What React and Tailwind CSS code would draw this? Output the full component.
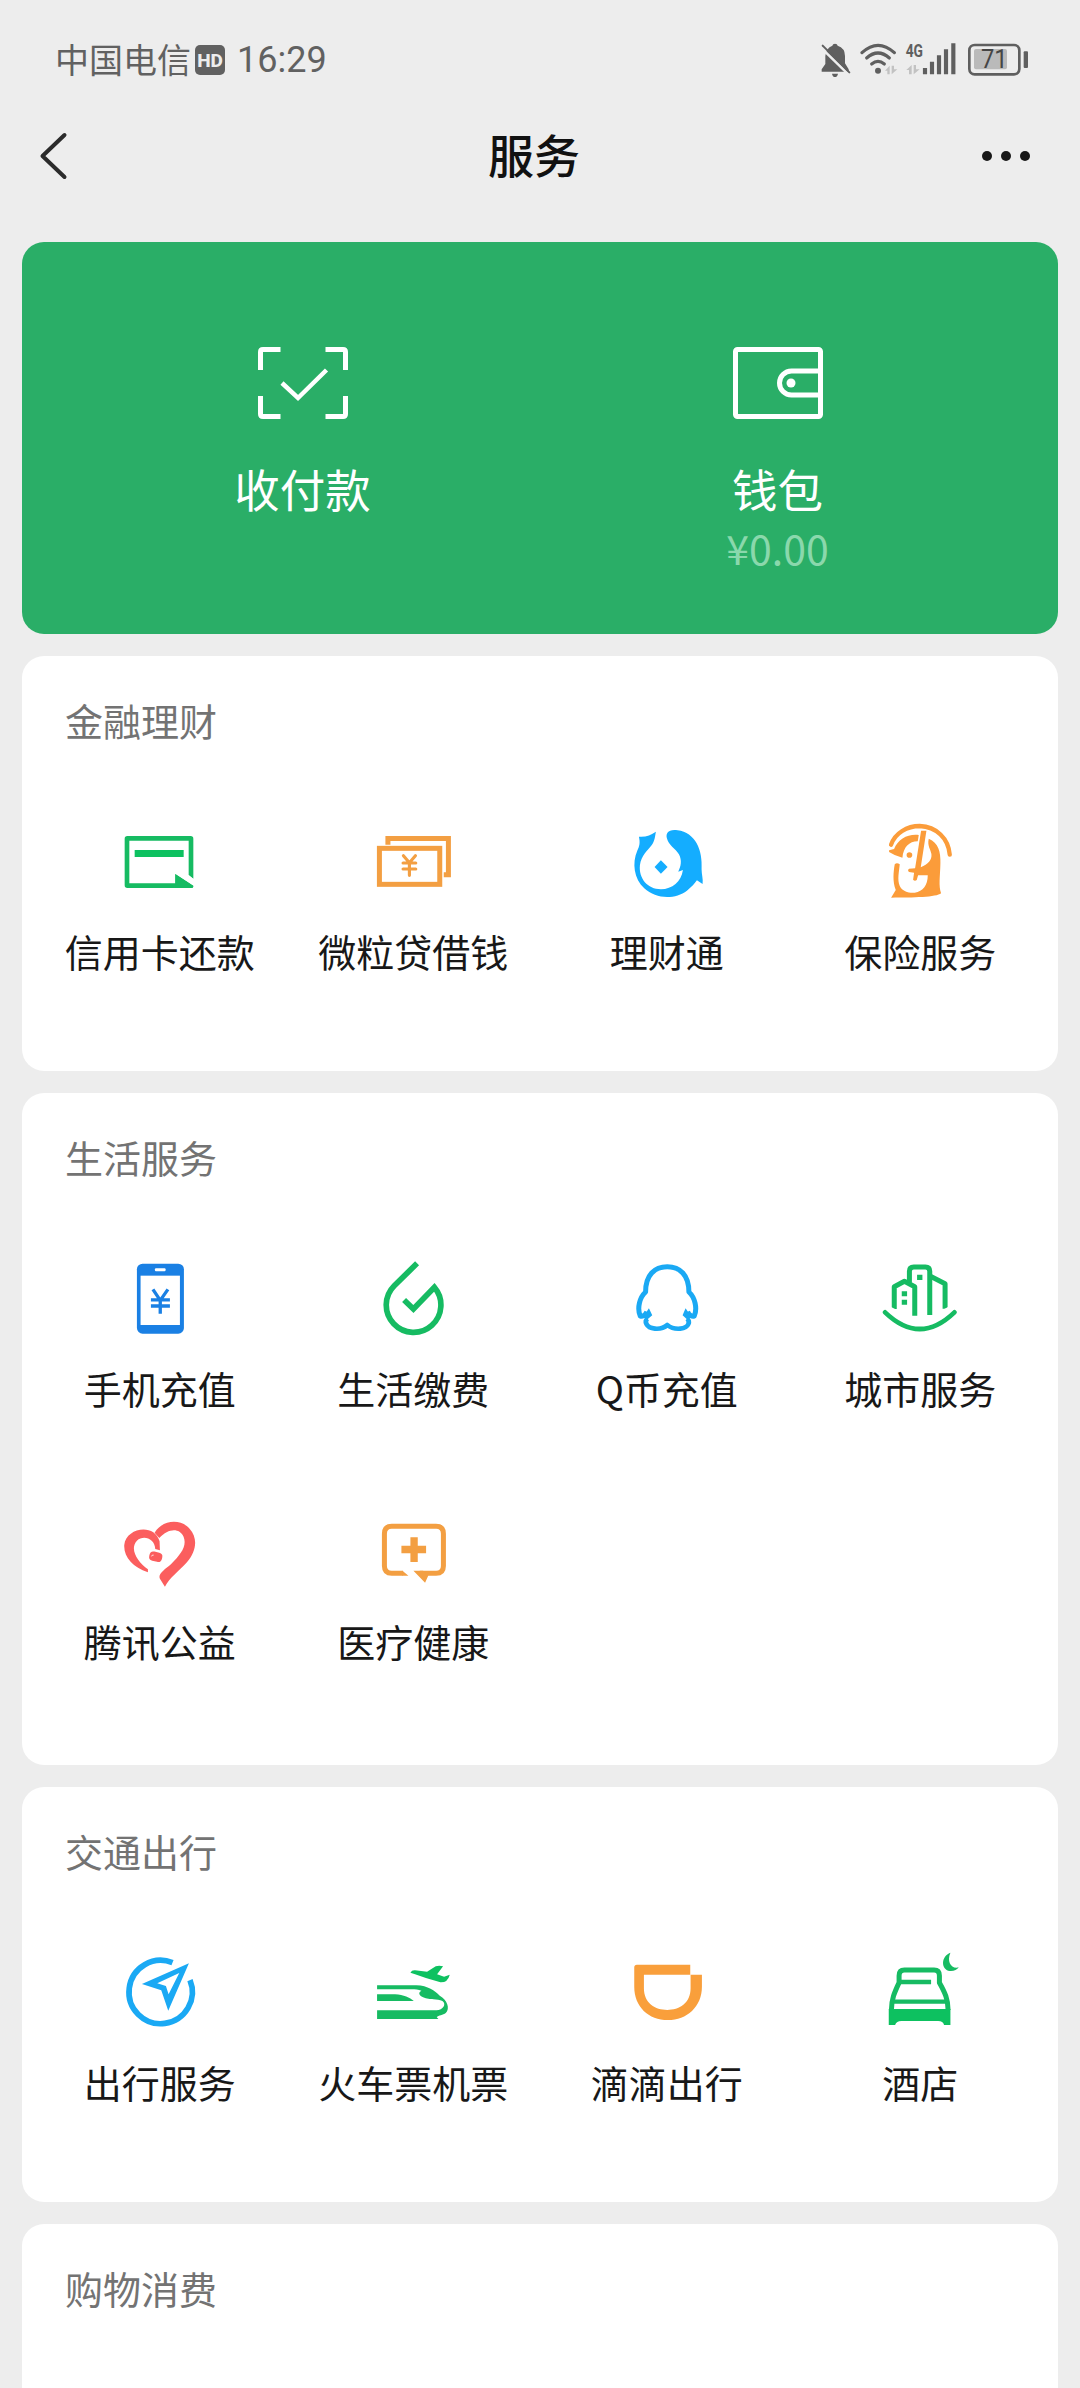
import React from "react";

const GREEN = "#16bb62";
const ORANGE = "#f39f42";
const BLUE = "#1aa9f4";

function Glyph({ box, children }) {
  return (
    <svg className="size-[84px]" viewBox={box} fill="none">
      {children}
    </svg>
  );
}

const CreditCard = () => (
  <Glyph box="233 60 252 252">
    <path d="M445 225 V122 H267 V250 H405 V222 L458 256 Q460 264 452 264 H261 Q253 264 253 256 V116 Q253 108 261 108 H451 Q459 108 459 116 V236Z" fill={GREEN} />
    <path d="M445 226 L459 237 V258 L405 222Z" fill="#fff" />
    <path d="M405 222 L459 257 Q460 264 452 264 H405Z" fill={GREEN} />
    <rect x="283" y="150" width="147" height="21" fill="#0dc160" />
  </Glyph>
);

const Loan = () => (
  <Glyph box="993.75 60 252 252">
    <rect x="1019" y="145" width="181" height="108" stroke={ORANGE} strokeWidth="15" />
    <path d="M1044.500 134 V115.500 H1226 V224 H1212" stroke={ORANGE} strokeWidth="15" />
    <g stroke={ORANGE} strokeWidth="9.500" strokeLinecap="round">
      <path d="M1091 167 L1109 188 L1127 167 M1109 188 V226 M1090 189 H1128 M1090 207 H1128" />
    </g>
  </Glyph>
);

const Wealth = () => (
  <Glyph box="194.25 60 252 252">
    <path
      d="M287 95 C272 105 256 112 236 110 C240 128 238 138 231 152 C215 188 221 237 252 265 C287 298 345 299 380 272 C394 261 404 250 410 241 L427 252 C429 237 424 224 424 208 C428 150 405 98 352 91 C324 87 316 100 320 115 C324 135 346 146 356 163 C366 182 362 199 354 215 L368 210 C363 245 336 267 302 268 C262 268 235 235 239 196 C243 166 262 152 274 136 C284 122 284 110 287 95Z"
      fill="#14adff"
    />
    <path d="M302 181 L322 201 L302 221 L283 201Z" fill="#14adff" />
  </Glyph>
);

const Insurance = () => (
  <Glyph box="954.75 60 252 252">
    <path d="M994 134 C1006 99 1042 78 1080 78 C1130 80 1166 115 1170 164" stroke="#fb9c3a" strokeWidth="13" strokeLinecap="round" />
    <path
      d="M1107 116 C1136 128 1143 155 1142 190 C1141 235 1136 255 1144 280 C1130 292 1060 293 994 293 L1008 270 C998 245 1001 215 1005 193 Q1011 186 1020 193 C1018 215 1012 240 1020 258 C1028 275 1050 280 1065 278 C1090 275 1104 255 1104 226 H1075 L1071 240 Q1065 245 1060 239 L1063 218 L1048 216 Q1042 211 1048 206 L1066 205 L1084 92 H1100 L1083 202 C1105 192 1117 180 1115 162 C1113 148 1102 138 1107 116Z"
      fill="#fb9c3a"
    />
    <path d="M988 151 L1003 147 C1015 117 1045 101 1077 105 L1074 124 C1048 124 1031 142 1028 173 Q1006 168 988 156Z" fill="#fb9c3a" />
    <circle cx="1049" cy="165" r="8.500" fill="#fb9c3a" />
  </Glyph>
);

const Phone = () => (
  <Glyph box="233.25 51 252 252">
    <rect x="290" y="71" width="141" height="210" rx="17" fill="#1a80e4" />
    <rect x="301" y="107" width="118" height="148" fill="#fff" />
    <rect x="344" y="85" width="32" height="9" rx="3" fill="#fff" />
    <path d="M338 148 L360 181 L383 148 M360 179 V221 M332 179.500 H389 M332 198 H389" stroke="#1a80e4" strokeWidth="10" />
  </Glyph>
);

const Utilities = () => (
  <Glyph box="993.75 51 252 252">
    <path d="M1132 70 L1063.500 137 A82 82 0 1 0 1184 142 L1121 207 L1093 180" stroke={GREEN} strokeWidth="17" />
  </Glyph>
);

const QCoin = () => (
  <Glyph box="194.25 51 252 252">
    <g stroke={BLUE} strokeWidth="15" strokeLinejoin="round">
      <path d="M260 215 C255 226 246 231 240 228 C230 205 238 172 256 156 C256 105 283 80 321 80 C359 80 386 105 386 156 C404 172 412 205 402 228 C396 231 387 226 382 215" />
      <path d="M262 236 C252 243 256 263 284 266 Q307 268 321 255 Q337 268 360 266 C388 263 390 243 380 236" strokeWidth="14" />
    </g>
    <path d="M266 205 L276 226 L262 238 L248 232Z M376 205 L367 226 L380 238 L394 232Z" fill={BLUE} />
  </Glyph>
);

const City = () => (
  <Glyph box="954.75 51 252 252">
    <g stroke={GREEN} strokeWidth="15">
      <path d="M976 217 Q1080 317 1184 217" strokeLinecap="round" strokeWidth="14" />
      <path d="M1003.500 207 V140 L1034 124 L1065 140 V227" strokeLinejoin="round" />
      <path d="M1049 128 V94 Q1049 81 1062 81 H1097 Q1110 81 1110 94 V225" />
      <path d="M1112 109 L1156 131 V206" strokeLinejoin="round" />
    </g>
    <path d="M1026 154 h16 v15 h-16Z M1026 179 h16 v15 h-16Z M1072 104 h16 v16 h-16Z" fill={GREEN} />
    <path d="M994 201 L1012 210 V216 H994Z M1148 210 L1166 200 V214 H1148Z" fill="#fff" />
  </Glyph>
);

const Charity = () => (
  <Glyph box="233.25 30 252 252">
    <path d="M343 98 C368 58 422 56 448 86 C475 116 467 156 440 187 C416 213 388 234 374 260 L359 236 C352 221 374 209 392 193 C422 163 441 138 430 110 C416 82 384 86 357 114Z" fill="#fb5e5e" />
    <path d="M323 217 C278 202 250 170 252 135 C257 84 342 68 358 124 L359 151 L345 147 C344 116 310 104 290 122 C266 148 294 188 323 208Z" fill="#fb5e5e" />
    <rect x="327" y="156" width="39" height="28" rx="12" transform="rotate(14 346 170)" fill="#fb5e5e" />
    <path d="M334 168 Q335 164 339 165" stroke="#fff" strokeWidth="2.500" strokeLinecap="round" />
  </Glyph>
);

const Medical = () => (
  <Glyph box="993.750 30 252 252">
    <path d="M1090 220 H1056 Q1034 220 1034 198 V101 Q1034 79 1056 79 H1189 Q1211 79 1211 101 V198 Q1211 220 1189 220 H1140" stroke={ORANGE} strokeWidth="15" />
    <path d="M1088 212.500 L1106 227.500 H1088Z M1121 212.500 H1150 L1166 226 L1156 248Z" fill={ORANGE} />
    <path d="M1112 112 H1134 V137 H1159 V160 H1134 V186 H1112 V160 H1085 V137 H1112Z" fill={ORANGE} />
  </Glyph>
);

const Travel = () => (
  <Glyph box="233.25 63 252 252">
    <path d="M449.200 150.200 A95 95 0 1 1 396.800 98" stroke={BLUE} strokeWidth="17" />
    <path fillRule="evenodd" d="M305 162 L446 100 L384 242 L363 181Z M351 160 L417 129 L385 193 L377 168Z" fill={BLUE} />
  </Glyph>
);

const Tickets = () => (
  <Glyph box="993.75 63 252 252">
    <path d="M1112 128 Q1116 120 1126 121 L1162 125 L1188 109 Q1198 106 1210 109 L1192 133 L1213 140 L1230 134 Q1224 158 1202 157 Q1160 146 1126 133Z" fill="#0dc160" />
    <path d="M1012 166 H1130 C1165 167 1185 183 1200 197 C1222 209 1232 235 1218 249 C1210 256 1196 255 1191 262 L1196 267 H1012 V241 H1190 C1210 240 1221 223 1208 213 C1192 205 1172 212 1150 202 C1137 195 1135 188 1145 182 C1132 177 1120 178 1100 178 H1012Z" fill={GREEN} />
    <path d="M1012 193 H1066 C1092 195 1110 203 1122 213 H1012Z" fill={GREEN} />
  </Glyph>
);

const Didi = () => (
  <Glyph box="194.25 63 252 252">
    <path d="M222 112 Q222 104 230 104 H390 V134 H251 V175 C251 220 285 240 321 240 C357 240 391 220 391 175 V134 H425 V170 C425 230 380 270 323 270 C265 270 222 230 222 170Z" fill="#f99f3b" />
  </Glyph>
);

const Hotel = () => (
  <Glyph box="954.75 63 252 252">
    <path d="M995 240 C995 208 1004 188 1018 158 V137 Q1018 120 1034 120 H1123 Q1139 120 1139 137 V158 C1156 188 1165 208 1165 240" stroke={GREEN} strokeWidth="15" />
    <path d="M1020 156 H1114 M1000 215 H1160" stroke={GREEN} strokeWidth="13" />
    <path d="M987 237 H1172 V285 H1153 Q1150 273 1135 273 H1025 Q1010 273 1006 285 H987Z" fill="#0dc160" />
    <path d="M1172 68 C1144 78 1142 118 1170 123 C1182 124 1192 120 1197 112 C1175 118 1160 95 1172 68Z" fill={GREEN} />
  </Glyph>
);

const sections = [
  {
    title: "金融理财",
    height: "h-[415px]",
    items: [
      ["信用卡还款", CreditCard],
      ["微粒贷借钱", Loan],
      ["理财通", Wealth],
      ["保险服务", Insurance],
    ],
  },
  {
    title: "生活服务",
    height: "h-[672px]",
    items: [
      ["手机充值", Phone],
      ["生活缴费", Utilities],
      ["Q币充值", QCoin],
      ["城市服务", City],
      ["腾讯公益", Charity],
      ["医疗健康", Medical],
    ],
  },
  {
    title: "交通出行",
    height: "h-[415px]",
    items: [
      ["出行服务", Travel],
      ["火车票机票", Tickets],
      ["滴滴出行", Didi],
      ["酒店", Hotel],
    ],
  },
  { title: "购物消费", height: "h-[415px]", items: [] },
];

function Section({ title, height, items }) {
  return (
    <section className={`shrink-0 rounded-[22px] bg-white px-[11px] ${height}`}>
      <h2 className="h-[164px] pt-[36px] pl-8 text-[38px] leading-[56px] text-[#737373]">{title}</h2>
      <div className="grid grid-cols-4">
        {items.map(([label, Icon]) => (
          <div key={label} className="flex h-[253px] flex-col items-center">
            <Icon />
            <span className="mt-[19px] text-[38px] leading-[56px] whitespace-nowrap text-[#181818]">{label}</span>
          </div>
        ))}
      </div>
    </section>
  );
}

function StatusIcons() {
  return (
    <div className="flex items-center text-[#5f5f5f]">
      <svg className="h-10 w-[34px]" viewBox="117 60 102 120">
        <path d="M165 71 Q172 71 173 77 Q195 84 195 108 V130 L206 148 V155 H125 V148 L136 132 V108 Q138 84 157 77 Q158 71 165 71Z M156 161 H174 Q172 171 165 171 Q158 171 156 161Z" fill="currentColor" />
        <path d="M122 82 L206 164" stroke="#ededed" strokeWidth="8" />
        <path d="M128 77 L208 157" stroke="currentColor" strokeWidth="6" strokeLinecap="round" />
      </svg>
      <svg className="ml-[6px] h-10 w-[42px]" viewBox="237 60 126 120" fill="none">
        <g stroke="currentColor" strokeWidth="9.500" strokeLinecap="round">
          <path d="M246 98 Q294 54 343 98" />
          <path d="M260 114 Q294 84 328 114" />
          <path d="M275 132 Q294 116 313 132" />
        </g>
        <circle cx="294" cy="152" r="9" fill="currentColor" />
        <path d="M315 152 L329 137 V163 H322 V152Z M335 137 H342 V148 H352 L335 163Z" fill="#c2c2c2" />
      </svg>
      <svg className="ml-1 h-10 w-[52px]" viewBox="375 60 156 120" fill="none">
        <text x="377" y="110" fontSize="53" fontWeight="700" textLength="52" lengthAdjust="spacingAndGlyphs" fontFamily="Roboto, sans-serif" fill="currentColor">4G</text>
        <path d="M379 150 L395 135 V163 H387 V150Z M401 135 H408 V148 H419 L401 163Z" fill="#c2c2c2" />
        <g stroke="currentColor" strokeWidth="12.500">
          <path d="M435 144 V163 M456 125 V163 M477 106 V163 M498 88 V163 M520 70 V163" />
        </g>
      </svg>
      <svg className="ml-[10px] h-10 w-[64px]" viewBox="561 60 192 120" fill="none">
        <rect x="568" y="75" width="150" height="88" rx="16" stroke="currentColor" strokeWidth="8" />
        <rect x="582" y="87" width="99" height="61" rx="6" fill="#bababa" />
        <rect x="731" y="94" width="13" height="50" rx="3" fill="currentColor" />
        <text x="603" y="144" fontSize="76" textLength="80" lengthAdjust="spacingAndGlyphs" fontFamily="Roboto, sans-serif" fill="#454545">71</text>
      </svg>
    </div>
  );
}

export default function App() {
  return (
    <div className="h-[2388px] w-[1080px] overflow-hidden bg-[#ededed] font-['Noto_Sans_CJK_SC',sans-serif]">
      <div className="flex h-[120px] items-center justify-between pr-[49px] pl-[55px]">
        <div className="flex items-center text-[#616161]">
          <span className="pb-[3px] text-[34px] leading-none">中国电信</span>
          <span className="ml-[4px] flex h-[30px] w-[30px] items-center justify-center rounded-[5px] bg-[#616161] font-[Roboto,sans-serif] text-[19px] leading-none font-extrabold text-[#ededed]">
            HD
          </span>
          <span className="ml-[12px] pb-px font-[Roboto,sans-serif] text-[36px] leading-none">16:29</span>
        </div>
        <StatusIcons />
      </div>

      <header className="grid h-[72px] grid-cols-3 items-center pr-[50px] pl-[38px]">
        <svg className="h-12 w-8" viewBox="0 0 32 48" fill="none">
          <path d="M26.500 3 L4.500 24 L26.500 45" stroke="#2b2b2b" strokeWidth="4" strokeLinecap="round" strokeLinejoin="round" />
        </svg>
        <h1 className="pb-[6px] text-center text-[46px] leading-[66px] font-medium text-[#111]">服务</h1>
        <div className="flex justify-end gap-[9px]">
          <i className="size-[10px] rounded-full bg-[#181818]" />
          <i className="size-[10px] rounded-full bg-[#181818]" />
          <i className="size-[10px] rounded-full bg-[#181818]" />
        </div>
      </header>

      <main className="flex flex-col gap-[22px] px-[22px] pt-[50px]">
        <section className="grid h-[392px] shrink-0 grid-cols-2 rounded-[22px] bg-[#2aae67] px-[43px] pt-[105px] text-white">
          <div className="flex flex-col items-center">
            <svg className="h-[72px] w-[90px]" viewBox="0 0 90 72" fill="none" stroke="currentColor" strokeWidth="5">
              <path d="M2.500 23 V5 Q2.500 2.500 5 2.500 H22.500 M67.500 2.500 H85 Q87.500 2.500 87.500 5 V23 M87.500 49 V67 Q87.500 69.500 85 69.500 H67.500 M22.500 69.500 H5 Q2.500 69.500 2.500 67 V49" />
              <path d="M24 36 L40 51 L68.500 23" strokeWidth="4.500" />
            </svg>
            <span className="mt-[35px] text-[45.5px] leading-[68px]">收付款</span>
          </div>
          <div className="flex flex-col items-center">
            <svg className="h-[72px] w-[90px]" viewBox="0 0 90 72" fill="none" stroke="currentColor" strokeWidth="5">
              <rect x="2.500" y="2.500" width="85" height="67" rx="2" />
              <path d="M87 24 H58.500 A12 12 0 0 0 58.500 48 H87" />
              <circle cx="58" cy="36" r="4.500" fill="currentColor" stroke="none" />
            </svg>
            <span className="mt-[35px] text-[45.5px] leading-[68px]">钱包</span>
            <span className="text-[41px] leading-[50px] text-[#8ad8ac]">¥0.00</span>
          </div>
        </section>
        {sections.map((s) => (
          <Section key={s.title} {...s} />
        ))}
      </main>
    </div>
  );
}
